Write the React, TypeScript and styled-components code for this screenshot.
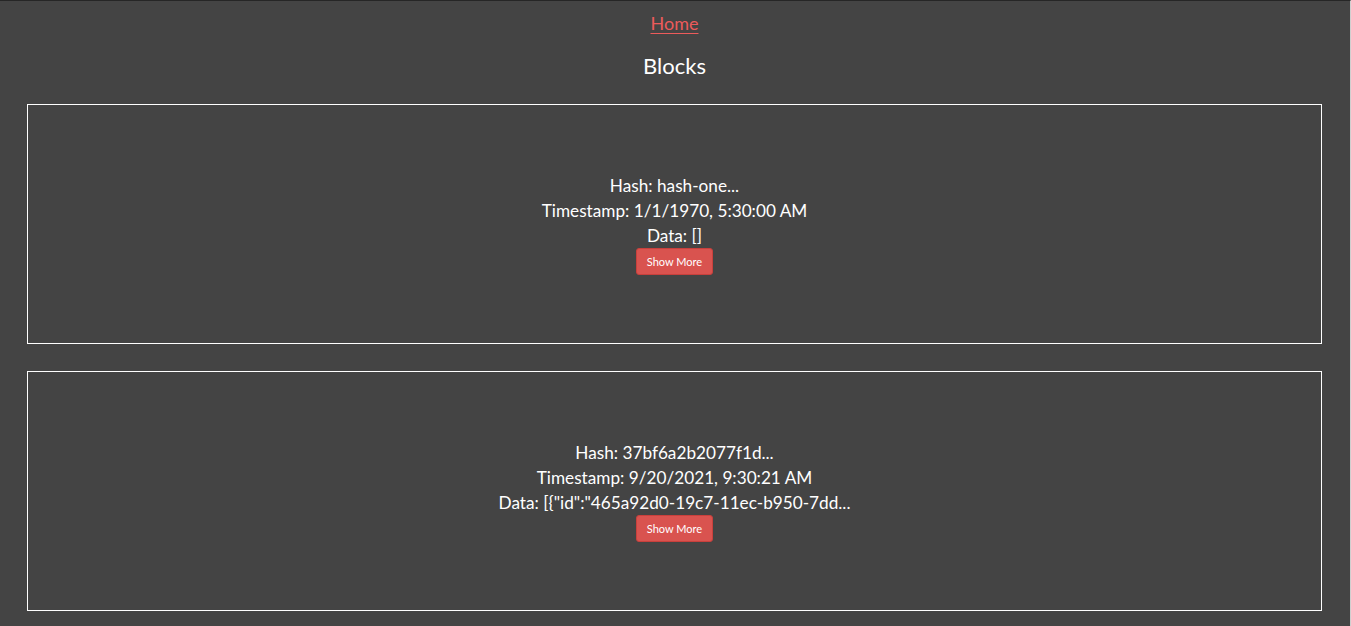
import React from "react";
import styled, { createGlobalStyle } from "styled-components";

const Global = createGlobalStyle`
  html, body { margin: 0; padding: 0; background: #444444; }
  body { font-family: "Lato", "Noto Sans", sans-serif; color: #ffffff; }
`;

const Page = styled.div`
  min-height: 626px;
  box-sizing: border-box;
  border-top: 1px solid #262626;
  border-right: 1px solid #cfcfcf;
  padding: 0 28px 0 27px;
  display: flex;
  flex-direction: column;
  align-items: stretch;
`;

const Nav = styled.nav`
  display: flex;
  justify-content: center;
  margin-top: 10px;
`;

const HomeLink = styled.a`
  font-size: 18px;
  line-height: 25px;
  color: #ec5b5b;
  text-decoration: underline;
  text-underline-offset: 3px;
  cursor: pointer;
`;

const Title = styled.h3`
  margin: 16px 0 24px;
  font-size: 22px;
  line-height: 28px;
  font-weight: 400;
  text-align: center;
`;

const List = styled.div`
  display: flex;
  flex-direction: column;
  gap: 27px;
`;

const Card = styled.div`
  border: 1px solid #ffffff;
  padding: 68px 0;
  display: flex;
  flex-direction: column;
  align-items: center;
`;

const Line = styled.div`
  font-size: 17.2px;
  line-height: 25px;
`;

const Button = styled.button`
  background: #d9534f;
  border: 1px solid #c9403c;
  border-radius: 3px;
  color: #ffffff;
  font-family: inherit;
  font-size: 11px;
  height: 27px;
  padding: 0 10px;
  cursor: pointer;
`;

const blocks = [
  { hash: "hash-one...", ts: "1/1/1970, 5:30:00 AM", data: "[]" },
  {
    hash: "37bf6a2b2077f1d...",
    ts: "9/20/2021, 9:30:21 AM",
    data: '[{"id":"465a92d0-19c7-11ec-b950-7dd...',
  },
];

export default function App() {
  return (
    <>
      <Global />
      <Page>
        <Nav>
          <HomeLink>Home</HomeLink>
        </Nav>
        <Title>Blocks</Title>
        <List>
          {blocks.map((b) => (
            <Card key={b.hash}>
              <Line>Hash: {b.hash}</Line>
              <Line>Timestamp: {b.ts}</Line>
              <Line>Data: {b.data}</Line>
              <Button>Show More</Button>
            </Card>
          ))}
        </List>
      </Page>
    </>
  );
}
